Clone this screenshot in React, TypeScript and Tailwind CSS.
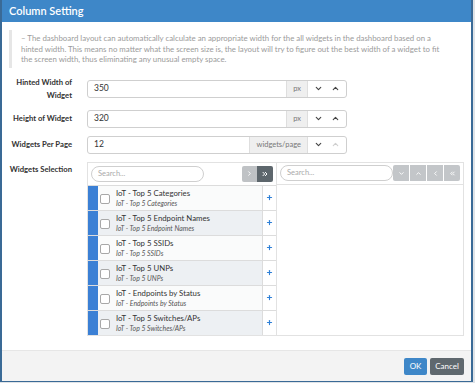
import React from "react";
import {
  ChevronDown,
  ChevronUp,
  ChevronRight,
  ChevronLeft,
  ChevronsRight,
  ChevronsLeft,
  Plus,
} from "lucide-react";

const widgets = [
  "IoT - Top 5 Categories",
  "IoT - Top 5 Endpoint Names",
  "IoT - Top 5 SSIDs",
  "IoT - Top 5 UNPs",
  "IoT - Endpoints by Status",
  "IoT - Top 5 Switches/APs",
];

const NumberField = ({
  value,
  unit,
  upDisabled,
}: {
  value: string;
  unit: string;
  upDisabled?: boolean;
}) => {
  return (
    <div className="flex h-[18px] w-[260px] items-stretch rounded-[3px] border border-[#cfcfcf] bg-white">
      <div className="flex flex-1 items-center pl-[6px] text-[8.5px] text-[#333]">{value}</div>
      <div className="flex items-center border-l border-[#dedede] bg-[#efefef] px-[6px] text-[7.5px] text-[#777]">
        {unit}
      </div>
      <div className="flex items-center gap-[8px] border-l border-[#dedede] px-[6px]">
        <ChevronDown size={9} strokeWidth={3} className="text-[#444]" />
        <ChevronUp size={9} strokeWidth={3} className={upDisabled ? "text-[#cfcfcf]" : "text-[#444]"} />
      </div>
    </div>
  );
};

const Label = ({ children }: { children: React.ReactNode }) => (
  <div className="w-[63px] shrink-0 whitespace-nowrap text-right text-[7.7px] font-bold leading-[13px] text-[#333]">
    {children}
  </div>
);

const SearchBox = () => (
  <div className="flex h-[16px] w-[113px] items-center rounded-full border border-[#cfcfcf] bg-white pl-[6px] text-[7.5px] text-[#aaa]">
    Search...
  </div>
);

export default function App() {
  return (
    <div className="h-[383px] w-[475px] bg-[#dfe3e7] font-['Lato','Liberation_Sans',sans-serif]">
      <div className="flex h-[382px] w-[473px] flex-col border-x-2 border-b border-[#3a6a96] bg-white">
        {/* header */}
        <div className="flex h-[22px] shrink-0 items-center bg-[#3e87c8] pl-[7px] text-[11px] font-semibold text-white">
          Column Setting
        </div>

        {/* body */}
        <div className="flex flex-1 flex-col gap-2 px-[7px] pt-2">
          <div className="border-l-[3px] border-[#e6e6e6] py-[3px] pl-[9px] pr-[14px] text-[7.85px] leading-[10.5px] text-[#9b9b9b]">
            – The dashboard layout can automatically calculate an appropriate width for the all widgets in the
            dashboard based on a hinted width. This means no matter what the screen size is, the layout will try to
            figure out the best width of a widget to fit the screen width, thus eliminating any unusual empty space.
          </div>

          <div className="flex items-center gap-[15px]">
            <Label>
              Hinted Width of
              <br />
              Widget
            </Label>
            <NumberField value="350" unit="px" />
          </div>

          <div className="flex items-center gap-[15px]">
            <Label>Height of Widget</Label>
            <NumberField value="320" unit="px" />
          </div>

          <div className="flex items-center gap-[15px]">
            <Label>Widgets Per Page</Label>
            <NumberField value="12" unit="widgets/page" upDisabled />
          </div>

          <div className="flex items-start gap-[15px]">
            <div className="pt-[1px]">
              <Label>Widgets Selection</Label>
            </div>
            <div className="flex w-[378px] border border-[#e2e2e2] bg-white">
              {/* left list */}
              <div className="flex w-[189px] flex-col border-r border-[#e2e2e2]">
                <div className="flex h-[22px] items-center justify-between pl-[3px] pr-[3px]">
                  <SearchBox />
                  <div className="flex">
                    <div className="flex h-[16px] w-[15px] items-center justify-center rounded-l-[2px] bg-[#bfc2c5]">
                      <ChevronRight size={7} strokeWidth={3} className="text-white" />
                    </div>
                    <div className="flex h-[16px] w-[16px] items-center justify-center rounded-r-[2px] bg-[#5d666c]">
                      <ChevronsRight size={8} strokeWidth={3} className="text-white" />
                    </div>
                  </div>
                </div>
                {widgets.map((w, i) => (
                  <div key={w} className="flex h-[25px] border-t border-[#dcdcdc]">
                    <div className="w-[10px] shrink-0 bg-[#3b80d5]" />
                    <div
                      className={`flex flex-1 items-center gap-[6px] pl-[2px] ${
                        i % 2 === 1 ? "bg-[#edf0f3]" : "bg-[#fafbfb]"
                      }`}
                    >
                      <div className="mt-[3px] h-[10px] w-[10px] shrink-0 rounded-[2px] border border-[#a8a8a8] bg-white" />
                      <div className="flex flex-col">
                        <div className="text-[7.8px] leading-[11px] text-[#333]">{w}</div>
                        <div className="text-[6.9px] italic leading-[9px] text-[#555]">{w}</div>
                      </div>
                    </div>
                    <div className="flex w-[14px] shrink-0 items-center justify-center border-l border-[#dcdcdc] bg-white">
                      <Plus size={7} strokeWidth={4} className="text-[#2d7fd6]" />
                    </div>
                  </div>
                ))}
              </div>

              {/* right list */}
              <div className="flex flex-1 flex-col">
                <div className="flex h-[22px] items-center justify-between border-b border-[#e2e2e2] pl-[3px] pr-[3px]">
                  <SearchBox />
                  <div className="flex gap-px">
                    {[ChevronDown, ChevronUp, ChevronLeft, ChevronsLeft].map((Icon, i) => (
                      <div
                        key={i}
                        className={`flex h-[16px] w-[16px] items-center justify-center bg-[#c3c6c9] ${
                          i === 0 ? "rounded-l-[2px]" : ""
                        } ${i === 3 ? "rounded-r-[2px]" : ""}`}
                      >
                        <Icon size={7} strokeWidth={3} className="text-white" />
                      </div>
                    ))}
                  </div>
                </div>
              </div>
            </div>
          </div>
        </div>

        {/* footer */}
        <div className="flex h-[31px] shrink-0 items-center justify-end gap-[3px] border-t border-[#e6e6e6] bg-[#f3f3f3] pr-[7px]">
          <button className="flex h-[17px] w-[23px] items-center justify-center rounded-[2px] bg-[#3e87c8] text-[8px] text-white">
            OK
          </button>
          <button className="flex h-[17px] w-[34px] items-center justify-center rounded-[2px] bg-[#5f686e] text-[8px] text-white">
            Cancel
          </button>
        </div>
      </div>
    </div>
  );
}
